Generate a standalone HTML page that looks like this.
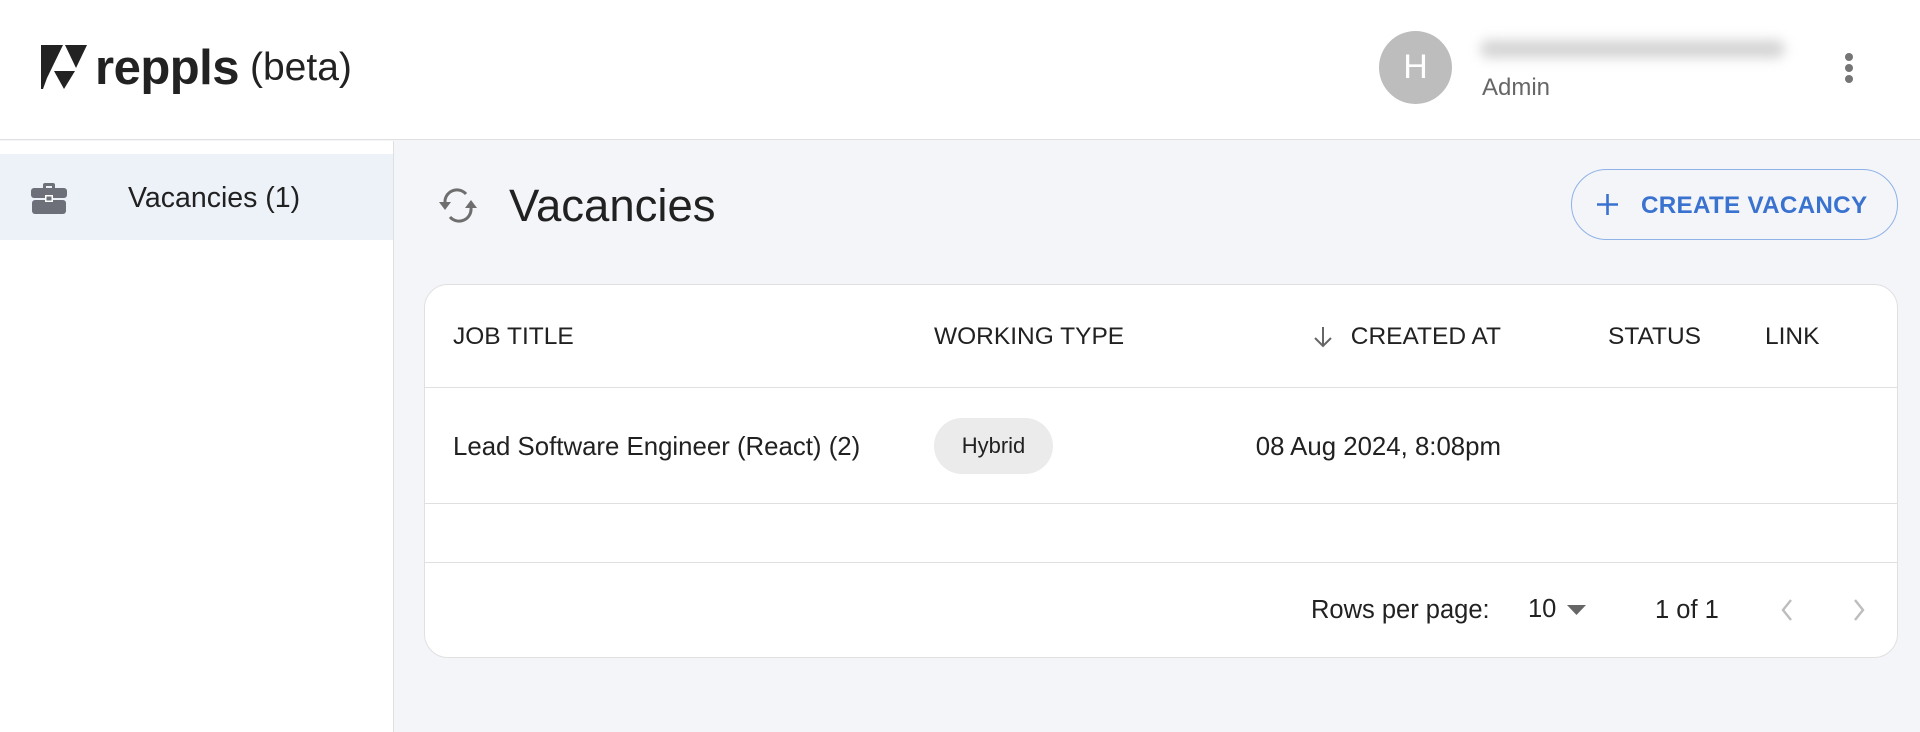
<!DOCTYPE html>
<html><head><meta charset="utf-8"><style>
*{box-sizing:border-box;margin:0;padding:0}
body{width:1920px;height:732px;overflow:hidden;background:#f4f5f9;font-family:"Liberation Sans",Arial,sans-serif;color:#212121;position:relative}
.abs{position:absolute}
#hdr{left:0;top:0;width:1920px;height:140px;background:#fff;border-bottom:1px solid #e0e0e0}
#side{left:0;top:141px;width:394px;height:591px;background:#fff;border-right:1px solid #e0e0e0}
.t{position:absolute;white-space:nowrap;line-height:1}
</style></head><body>
<div id="hdr" class="abs">
 <svg class="abs" style="left:41px;top:45px" width="46" height="44" viewBox="0 0 46 44">
  <path d="M0 0H22L6 33 2 44H0Z" fill="#222"/>
  <path d="M24 0H46L35 23Z" fill="#222"/>
  <path d="M13 26H34L23 44Z" fill="#222"/>
 </svg>
 <div class="t" style="left:95px;top:44px;font-size:49px;font-weight:bold;letter-spacing:-0.5px;color:#222">reppls</div>
 <div class="t" style="left:250px;top:48px;font-size:39px;color:#222">(beta)</div>
 <div class="abs" style="left:1379px;top:31px;width:73px;height:73px;border-radius:50%;background:#bdbdbd;color:#fff;font-size:34px;text-align:center;line-height:73px">H</div>
 <div class="abs" style="left:1480px;top:40px;width:305px;height:18px;border-radius:9px;background:#d4d4d4;filter:blur(6px)"></div>
 <div class="t" style="left:1482px;top:76px;font-size:24px;color:#666">Admin</div>
 <div class="abs" style="left:1845px;top:53px;width:8px;height:8px;border-radius:50%;background:#757575"></div>
 <div class="abs" style="left:1845px;top:64px;width:8px;height:8px;border-radius:50%;background:#757575"></div>
 <div class="abs" style="left:1845px;top:75px;width:8px;height:8px;border-radius:50%;background:#757575"></div>
</div>
<div id="side" class="abs">
 <div class="abs" style="left:0;top:13px;width:393px;height:86px;background:#edf2f9"></div>
 <svg class="abs" style="left:31px;top:41px" width="36" height="32" viewBox="0 0 36 32">
  <path d="M12 6V3a2 2 0 0 1 2-2h8a2 2 0 0 1 2 2v3h-3V4h-6v2z" fill="#6e7079"/>
  <rect x="0" y="6" width="36" height="10" rx="3" fill="#6e7079"/>
  <rect x="1" y="18" width="34" height="14" rx="3" fill="#6e7079"/>
  <rect x="14" y="13" width="8" height="7" fill="#fff"/>
  <rect x="15.5" y="14.5" width="5" height="4" fill="#6e7079"/>
 </svg>
 <div class="t" style="left:128px;top:43px;font-size:28.5px">Vacancies (1)</div>
</div>
<svg class="abs" style="left:438px;top:187px" width="40" height="36" viewBox="438 187 40 36" fill="none" stroke="#6e6e6e" stroke-width="3">
 <path d="M466 194a12 12 0 0 0-21 9"/>
 <path d="M450 217a12 12 0 0 0 21-9"/>
 <path d="M439 202h12l-6 8z" fill="#6e6e6e" stroke="none"/>
 <path d="M465 208h12l-6-8z" fill="#6e6e6e" stroke="none"/>
</svg>
<div class="t" style="left:509px;top:183px;font-size:45.5px">Vacancies</div>
<div class="abs" style="left:1571px;top:169px;width:327px;height:71px;border:1px solid #8fb2e8;border-radius:36px"></div>
<svg class="abs" style="left:1596px;top:193px" width="23" height="23" viewBox="0 0 23 23"><path d="M11.5 1V22M1 11.5H22" stroke="#3a72d0" stroke-width="2.6"/></svg>
<div class="t" style="left:1641px;top:194px;font-size:24.2px;font-weight:bold;color:#3a72d0;letter-spacing:0.3px">CREATE VACANCY</div>
<div class="abs" style="left:424px;top:284px;width:1474px;height:374px;background:#fff;border:1px solid #e0e0e0;border-radius:24px;overflow:hidden">
 <div class="abs" style="left:0;top:102px;width:100%;height:1px;background:#e0e0e0"></div>
 <div class="abs" style="left:0;top:218px;width:100%;height:1px;background:#e0e0e0"></div>
 <div class="abs" style="left:0;top:277px;width:100%;height:1px;background:#e0e0e0"></div>
</div>
<div class="t" style="left:453px;top:325px;font-size:24.5px">JOB TITLE</div>
<div class="t" style="left:934px;top:325px;font-size:24.5px">WORKING TYPE</div>
<svg class="abs" style="left:1312px;top:325px" width="22" height="24" viewBox="0 0 22 24"><path d="M11 2V21M3 13l8 8 8-8" fill="none" stroke="#666" stroke-width="2"/></svg>
<div class="t" style="left:1300px;top:325px;font-size:24.5px;width:201px;text-align:right">CREATED AT</div>
<div class="t" style="left:1608px;top:325px;font-size:24.5px">STATUS</div>
<div class="t" style="left:1765px;top:325px;font-size:24.5px">LINK</div>
<div class="t" style="left:453px;top:435px;font-size:25.8px">Lead Software Engineer (React) (2)</div>
<div class="abs" style="left:934px;top:418px;width:119px;height:56px;border-radius:28px;background:#ebebeb;font-size:22px;text-align:center;line-height:56px">Hybrid</div>
<div class="t" style="left:1150px;top:435px;width:351px;text-align:right;font-size:25.8px">08 Aug 2024, 8:08pm</div>
<div class="t" style="left:1311px;top:598px;font-size:25.5px">Rows per page:</div>
<div class="t" style="left:1528px;top:597px;font-size:25.5px">10</div>
<svg class="abs" style="left:1567px;top:605px" width="19" height="10"><path d="M0 0H19L9.5 10Z" fill="#666"/></svg>
<div class="t" style="left:1655px;top:598px;font-size:25.5px">1 of 1</div>
<svg class="abs" style="left:1780px;top:598px" width="14" height="24"><path d="M11 2L3 12l8 10" fill="none" stroke="#bdbdbd" stroke-width="2.4"/></svg>
<svg class="abs" style="left:1852px;top:598px" width="14" height="24"><path d="M3 2l8 10-8 10" fill="none" stroke="#bdbdbd" stroke-width="2.4"/></svg>
</body></html>
